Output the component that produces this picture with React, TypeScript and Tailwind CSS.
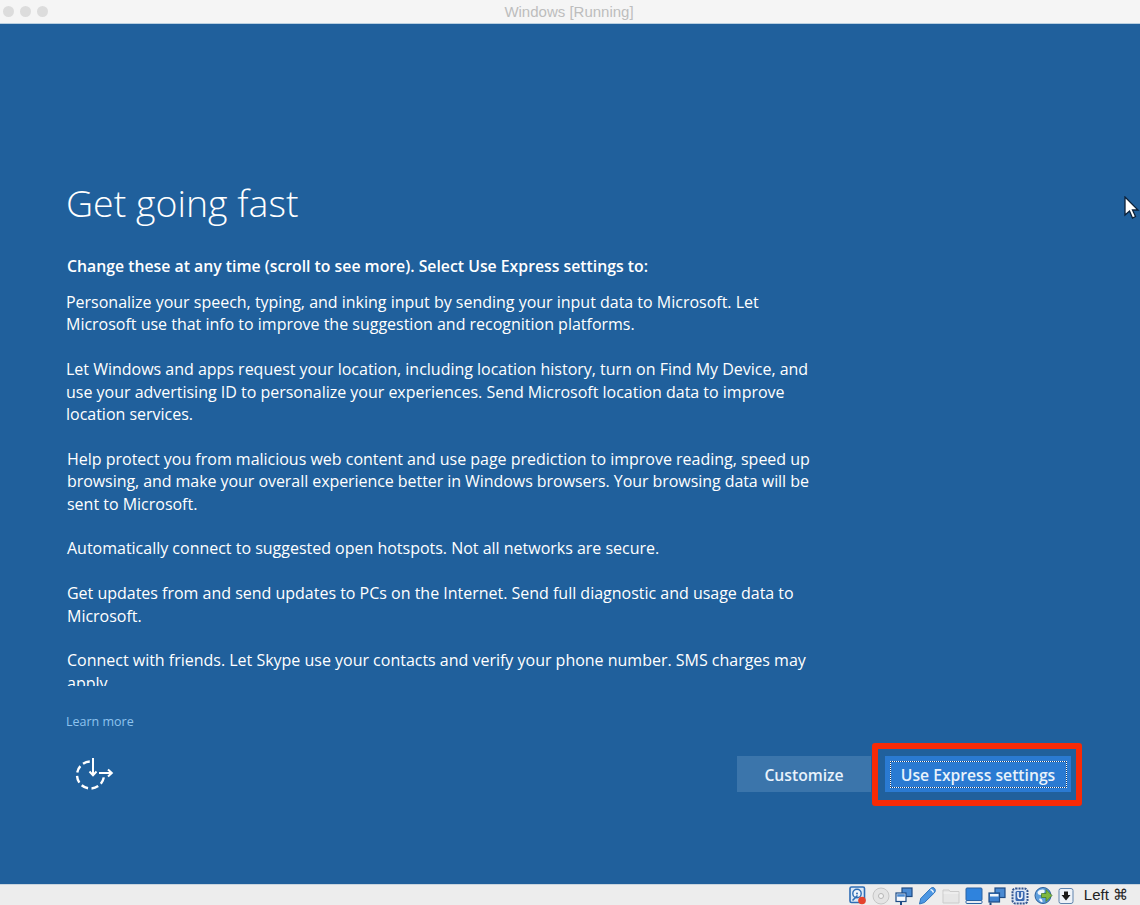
const paragraphs = [
  ["Personalize your speech, typing, and inking input by sending your input data to Microsoft. Let", "Microsoft use that info to improve the suggestion and recognition platforms."],
  ["Let Windows and apps request your location, including location history, turn on Find My Device, and", "use your advertising ID to personalize your experiences. Send Microsoft location data to improve", "location services."],
  ["Help protect you from malicious web content and use page prediction to improve reading, speed up", "browsing, and make your overall experience better in Windows browsers. Your browsing data will be", "sent to Microsoft."],
  ["Automatically connect to suggested open hotspots. Not all networks are secure."],
  ["Get updates from and send updates to PCs on the Internet. Send full diagnostic and usage data to", "Microsoft."],
  ["Connect with friends. Let Skype use your contacts and verify your phone number. SMS charges may", "apply."],
];

function ClockIcon() {
  return (
    <svg width="40" height="36" viewBox="0 0 40 36" fill="none" stroke="white" strokeWidth="2.4">
      <circle cx="16.500" cy="19" r="13.500" strokeDasharray="7.070 3.530 7.070 3.530 7.070 3.530 7.070 3.530 7.070 3.530 7.070 24.700" transform="rotate(10 16.500 19)" />
      <path d="M19 2v17M15.500 15.500l3.500 3.700 3.500-3.700" strokeWidth="2" />
      <path d="M25 17h13M34 13.500l3.800 3.500-3.800 3.500" strokeWidth="2" />
    </svg>
  );
}

function StatusIcons() {
  return (
    <div className="flex items-center gap-[5px] mt-[1px]">
      <svg width="18" height="19" viewBox="0 0 18 19">
        <rect x="1" y="1" width="14.500" height="15.500" rx="1.500" fill="#dce8f5" stroke="#2e6db5" strokeWidth="1.600" />
        <circle cx="8" cy="7.500" r="4.200" fill="#eef4fb" stroke="#2e6db5" strokeWidth="1.400" />
        <circle cx="8" cy="7.500" r="1" fill="#2e6db5" />
        <path d="M3.500 14.500l5-5" stroke="#2e6db5" strokeWidth="1.600" />
        <circle cx="13" cy="14.500" r="3.800" fill="#e5432d" />
      </svg>
      <svg width="18" height="18" viewBox="0 0 18 18">
        <circle cx="9" cy="9" r="8" fill="#e4e4e4" stroke="#c6c6c6" />
        <circle cx="9" cy="9" r="2.500" fill="#f3f3f3" stroke="#b5b5b5" />
      </svg>
      <svg width="18" height="18" viewBox="0 0 18 18">
        <rect x="7" y="1" width="10" height="8.500" fill="#4a8ad2" stroke="#1f4c85" strokeWidth="1.200" />
        <rect x="1" y="6" width="10" height="8.500" fill="#f7f9fc" stroke="#1f4c85" strokeWidth="1.200" />
        <rect x="2.200" y="7.200" width="7.600" height="2.500" fill="#4a8ad2" />
        <path d="M6 14.500v3.500" stroke="#1f4c85" strokeWidth="2" />
      </svg>
      <svg width="19" height="19" viewBox="0 0 19 19">
        <path d="M1.500 18l1.200-5.500L12.500 2.500c1.500-1.500 3.500-1 4.300.2s.7 3-.6 4.300L6.500 16.500z" fill="#4d97e3" stroke="#2f74bd" />
        <path d="M12.500 3.500c1.200.3 2.500 1.500 3 3" stroke="#eaf3fc" strokeWidth="1.600" fill="none" />
      </svg>
      <svg width="18" height="17" viewBox="0 0 18 17">
        <path d="M1 3h6l1 1.500h9V16H1z" fill="#e6e6e6" stroke="#cbcbcb" />
        <path d="M1.500 6h15" stroke="#f4f4f4" />
      </svg>
      <svg width="18" height="18" viewBox="0 0 18 18">
        <rect x="1" y="1" width="16" height="12.500" rx="1" fill="#2f83dd" stroke="#2a62a3" />
        <rect x="1" y="13.500" width="16" height="3" rx="1" fill="#e6ecf3" stroke="#2a62a3" />
      </svg>
      <svg width="18" height="18" viewBox="0 0 18 18">
        <rect x="7" y="1" width="10" height="9.500" fill="#4a8ad2" stroke="#1f4c85" strokeWidth="1.200" />
        <rect x="1" y="6" width="10.500" height="9" fill="#3f82cf" stroke="#1f4c85" strokeWidth="1.200" />
        <rect x="2" y="7" width="8.500" height="2.500" fill="#f2f6fb" />
        <path d="M2.500 15.500v2.500" stroke="#1f4c85" strokeWidth="2" />
      </svg>
      <svg width="18" height="18" viewBox="0 0 18 18">
        <rect x="1.500" y="1.500" width="15" height="15" rx="3" fill="#dbe6f6" stroke="#33558f" strokeWidth="2" strokeDasharray="2 1" />
        <rect x="4.500" y="4" width="9" height="10" rx="1.500" fill="#3a68b0" />
        <path d="M7 5v4.500a2 2 0 0 0 4 0V5" fill="none" stroke="#fff" strokeWidth="1.500" />
      </svg>
      <svg width="19" height="19" viewBox="0 0 19 19">
        <circle cx="9" cy="9.500" r="8" fill="#5f9fdc" stroke="#2b5f9c" />
        <path d="M3.500 6c2.500-3 6-3 7-1.500S8.500 9 6.500 9 3.500 8 3.500 6zM5 13c2-1 3 0 3.500 2s-2 1.500-3.500-2z" fill="#f0f6fc" />
        <path d="M7.500 7.500h4.500V3.500l6 6-6 6v-4H7.500z" fill="#7fb83f" stroke="#3d7420" strokeWidth=".7" />
      </svg>
      <svg width="16" height="18" viewBox="0 0 16 18">
        <rect x="1" y="1.500" width="14" height="15" rx="2" fill="#edf2f8" stroke="#5f83ad" />
        <path d="M6 4.500h4V8h2.500L8 13.500 3.500 8H6z" fill="#1a1a1a" />
      </svg>
    </div>
  );
}

export default function App() {
  return (
    <div className="w-[1140px] h-[905px] overflow-hidden flex flex-col bg-[#20609c] font-['Open_Sans','Noto_Sans',sans-serif] relative">
      <header className="h-[24px] shrink-0 bg-[#f5f5f5] border-b border-[#b9cfe0] flex items-center">
        <div className="flex gap-[6px] pl-[3px]">
          <span className="w-[11px] h-[11px] rounded-full bg-[#dcdcdc]" />
          <span className="w-[11px] h-[11px] rounded-full bg-[#dcdcdc]" />
          <span className="w-[11px] h-[11px] rounded-full bg-[#dcdcdc]" />
        </div>
        <span className="flex-1 text-center text-[15px] text-[#bdbdbd] font-['Liberation_Sans',sans-serif] pr-[50px] pt-[2px]">Windows [Running]</span>
      </header>

      <main className="flex-1 flex flex-col pl-[66px] pt-[154px] text-white min-h-0">
        <h1 className="text-[37.500px] leading-[50px] font-light">Get going fast</h1>
        <p className="mt-[26px] ml-[1px] text-[15.800px] leading-[24px] font-semibold">Change these at any time (scroll to see more). Select Use Express settings to:</p>
        <div className="mt-[13px] h-[395px] w-[780px] overflow-hidden text-[16px] leading-[22.400px] tracking-[-0.01px]">
          {paragraphs.map((p, i) => (
            <p key={i} className={i >= 2 ? "mb-[22.400px] ml-[1px]" : "mb-[22.400px]"}>
              {p.map((l) => (
                <span key={l} className={l.startsWith("browsing") ? "block whitespace-nowrap tracking-[-0.06px]" : "block whitespace-nowrap"}>{l}</span>
              ))}
            </p>
          ))}
        </div>
        <a className="mt-[27px] text-[12.500px] leading-[18px] text-[#8ec3ee]">Learn more</a>
        <div className="mt-[25px] flex items-start pr-[69px]">
          <div className="ml-[8px]"><ClockIcon /></div>
          <div className="ml-auto flex items-center">
            <button className="w-[134px] h-[36px] pt-[3px] bg-[#3b75ab] text-[15.700px] font-semibold text-[#e8f2fb]">Customize</button>
            <div className="ml-[14px] relative">
              <div className="absolute -left-[13px] -right-[11px] -top-[13px] -bottom-[14px] border-[6px] border-[#f82a06] rounded-[3px]" />
              <button className="w-[186px] h-[36px] bg-[#2a7ad2] text-[15.700px] font-semibold text-[#e8f2fb] flex items-center justify-center">
                <span className="w-[177px] h-[27px] pt-[3px] border border-[#1c3f6b] outline-1 outline-dotted -outline-offset-1 outline-white flex items-center justify-center">Use Express settings</span>
              </button>
            </div>
          </div>
        </div>
      </main>

      <footer className="h-[21px] shrink-0 bg-[#ededed] border-t border-[#c8d4de] flex items-center justify-end pr-[12px]">
        <StatusIcons />
        <span className="ml-[10px] text-[15px] text-[#222] font-['Liberation_Sans',sans-serif] whitespace-nowrap">Left ⌘</span>
      </footer>

      <svg className="absolute left-[1124px] top-[196px]" width="16" height="24" viewBox="0 0 16 24">
        <path d="M1 1v18l4.500-4 3 7 3-1.500-3-6.500H14z" fill="white" stroke="#0b2038" strokeWidth="1.300" />
      </svg>
    </div>
  );
}
